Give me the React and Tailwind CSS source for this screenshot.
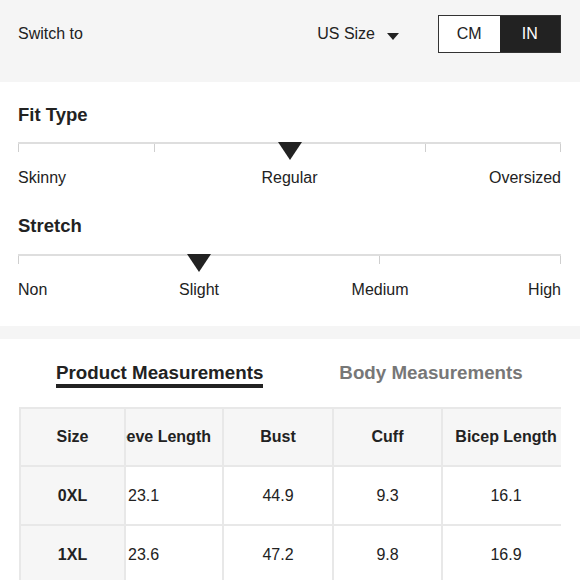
const rows = [
  { size: "0XL", sleeve: "23.1", bust: "44.9", cuff: "9.3", bicep: "16.1" },
  { size: "1XL", sleeve: "23.6", bust: "47.2", cuff: "9.8", bicep: "16.9" },
];

const Triangle = () => (
  <svg width="24" height="18" viewBox="0 0 24 18" className="block">
    <polygon points="0,0 24,0 12,18" fill="#222" />
  </svg>
);

const Track = ({ segments, marker }) => (
  <div className="relative h-[18px]">
    <div className="flex border-t-2 border-[#dedede]">
      {Array.from({ length: segments }).map((_, i) => (
        <div
          key={i}
          className={
            "flex-1 h-[8px] border-l border-[#cfcfcf]" +
            (i === segments - 1 ? " border-r" : "")
          }
        />
      ))}
    </div>
    <div className={"absolute top-0 " + marker}>
      <Triangle />
    </div>
  </div>
);

const cell = "h-[59px] border-r-2 border-b-2 border-[#e8e8e8] flex items-center text-[16px]";

export default function App() {
  return (
    <div className="w-[580px] h-[580px] overflow-hidden bg-white text-[#222] font-['Liberation_Sans',Arial,sans-serif]">
      {/* Top bar */}
      <div className="h-[82px] bg-[#f5f5f5] pl-[18px] pr-[19px]">
        <div className="h-[67px] flex items-center">
          <span className="text-[16px]">Switch to</span>
          <div className="ml-auto flex items-center">
            <span className="text-[16px] mt-[1px]">US Size</span>
            <svg width="12" height="7" viewBox="0 0 12 7" className="ml-[12px] mt-[6px]">
              <polygon points="0,0 12,0 6,7" fill="#222" />
            </svg>
            <div className="ml-[39px] flex h-[38px] w-[123px] border-[1.5px] border-[#333] text-[16px]">
              <span className="flex-1 bg-white flex items-center justify-center">CM</span>
              <span className="flex-1 bg-[#222] text-white flex items-center justify-center">IN</span>
            </div>
          </div>
        </div>
      </div>

      {/* Fit & stretch */}
      <div className="pt-[22px] pl-[18px] pr-[19px] pb-[26px]">
        <h3 className="h-[22px] leading-[22px] text-[18.5px] font-bold">Fit Type</h3>
        <div className="mt-[16px]">
          <Track segments={4} marker="left-[calc(50%-12px)]" />
        </div>
        <div className="mt-[8px] grid grid-cols-3 text-[16px] leading-[20px]">
          <span>Skinny</span>
          <span className="text-center">Regular</span>
          <span className="text-right">Oversized</span>
        </div>

        <h3 className="mt-[27px] h-[22px] leading-[22px] text-[18.5px] font-bold">Stretch</h3>
        <div className="mt-[17px]">
          <Track segments={3} marker="left-[calc(33.333%-12px)]" />
        </div>
        <div className="mt-[8px] grid grid-cols-6 text-[16px] leading-[20px]">
          <span>Non</span>
          <span className="col-span-2 text-center">Slight</span>
          <span className="col-span-2 text-center">Medium</span>
          <span className="text-right">High</span>
        </div>
      </div>

      <div className="h-[13px] bg-[#f5f5f5]" />

      {/* Tabs */}
      <div className="pt-[23px] pl-[56px] flex items-start text-[18.75px] font-bold leading-[22px]">
        <span className="border-b-4 border-[#222]">Product Measurements</span>
        <span className="ml-[76px] text-[#777]">Body Measurements</span>
      </div>

      {/* Table */}
      <div className="mt-[19px] ml-[19px] w-[542px] overflow-hidden">
        <div className="w-[554px] grid grid-cols-[105px_98px_110px_109px_128px] border-t-2 border-l-2 border-[#e8e8e8]">
          <div className={cell + " !h-[58px] bg-[#f6f6f6] justify-center font-bold"}>Size</div>
          <div className={cell + " !h-[58px] bg-[#f6f6f6] justify-end pr-[11px] overflow-hidden whitespace-nowrap font-bold"}>
            Sleeve Length
          </div>
          <div className={cell + " !h-[58px] bg-[#f6f6f6] justify-center font-bold"}>Bust</div>
          <div className={cell + " !h-[58px] bg-[#f6f6f6] justify-center font-bold"}>Cuff</div>
          <div className={cell + " !h-[58px] bg-[#f6f6f6] justify-center font-bold whitespace-nowrap"}>Bicep Length</div>
          {rows.map((r) => (
            <div key={r.size} className="contents">
              <div className={cell + " bg-[#f6f6f6] justify-center font-bold"}>{r.size}</div>
              <div className={cell + " justify-start pl-[2px]"}>{r.sleeve}</div>
              <div className={cell + " justify-center"}>{r.bust}</div>
              <div className={cell + " justify-center"}>{r.cuff}</div>
              <div className={cell + " justify-center"}>{r.bicep}</div>
            </div>
          ))}
        </div>
      </div>
    </div>
  );
}
